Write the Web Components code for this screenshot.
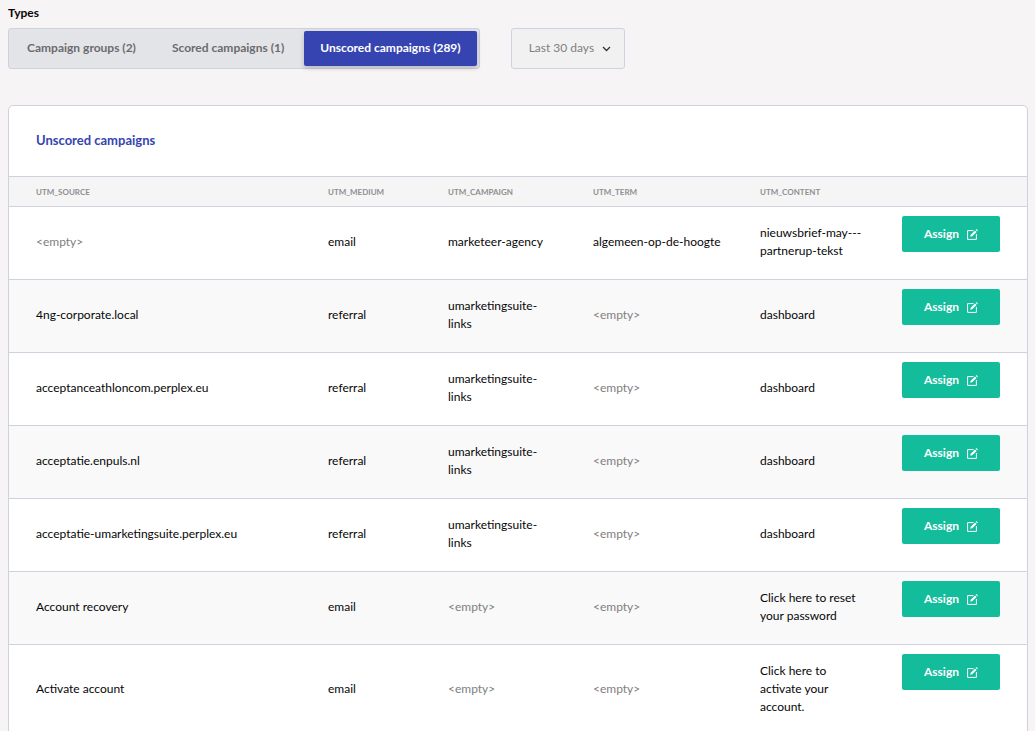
<!DOCTYPE html>
<html lang="en">
<head>
<meta charset="utf-8">
<title>Unscored campaigns</title>
<style>
    html {
        --line: #cfd1dd;
        --blue: #3544b1;
        --green: #13bd9b;
    }
    body {
        margin: 0 7px 0 8px;
        background-color: #f6f4f5;
        color: #060606;
        font-family: Lato, "Liberation Sans", sans-serif;
        font-size: 12px;
        line-height: 18px;
    }
</style>
</head>
<body>
<campaigns-page>
    <type-tabs slot="filters" label="Types">
        <type-tab>Campaign groups (2)</type-tab>
        <type-tab>Scored campaigns (1)</type-tab>
        <type-tab active>Unscored campaigns (289)</type-tab>
    </type-tabs>
    <period-select slot="filters"></period-select>
    <data-card>
        <span slot="title">Unscored campaigns</span>
        <campaign-table></campaign-table>
    </data-card>
</campaigns-page>

<script>
function crearTemplate(html) {
    const template = document.createElement('template');
    template.innerHTML = html;
    return template;
}

class BaseElement extends HTMLElement {
    constructor() {
        super();
        this.attachShadow({ mode: "open" });
        this.shadowRoot.appendChild(this.constructor.template.content.cloneNode(true));
    }
}

class CampaignsPage extends BaseElement {
    static template = crearTemplate(`
<style>
:host {
    display: block;
}
.filters {
    display: flex;
    align-items: flex-end;
    gap: 31px;
    padding-top: 4px;
    margin-bottom: 36px;
}
</style>
<div class="filters"><slot name="filters"></slot></div>
<main><slot></slot></main>
`);
}

class TypeTabs extends BaseElement {
    static template = crearTemplate(`
<style>
:host {
    display: block;
}
#label {
    font-weight: bold;
    margin-bottom: 6px;
}
.bar {
    display: flex;
    gap: 4px;
    padding: 2px;
    border: 1px solid var(--line);
    border-radius: 3px;
    background-color: #e3e4e8;
}
</style>
<div id="label"></div>
<div class="bar" role="group" aria-labelledby="label"><slot></slot></div>
`);
    connectedCallback() {
        this.shadowRoot.getElementById("label").textContent = this.getAttribute("label");
        this.addEventListener("click", (e) => {
            const tab = e.target.closest("type-tab");
            if (!tab) return;
            this.querySelectorAll("type-tab").forEach((t) => t.toggleAttribute("active", t === tab));
        });
    }
}

class TypeTab extends BaseElement {
    static template = crearTemplate(`
<style>
:host {
    display: block;
}
button {
    display: block;
    height: 35px;
    padding: 0 16px 2px;
    border: 0;
    border-radius: 2px;
    background: none;
    color: #6b6b6e;
    font: inherit;
    font-weight: bold;
    white-space: nowrap;
    cursor: pointer;
}
:host([active]) button {
    background-color: var(--blue);
    color: #fff;
    box-shadow: 0 2px 5px rgba(0, 0, 0, 0.2);
}
</style>
<button type="button"><slot></slot></button>
`);
}

class PeriodSelect extends BaseElement {
    static template = crearTemplate(`
<style>
:host {
    display: block;
}
.box {
    display: grid;
    align-items: center;
}
select, svg {
    grid-area: 1 / 1;
}
select {
    appearance: none;
    height: 41px;
    margin: 0;
    padding: 0 29px 2px 17px;
    border: 1px solid var(--line);
    border-radius: 3px;
    background-color: #f1f1f1;
    color: #808080;
    font: inherit;
}
svg {
    justify-self: end;
    margin-right: 14px;
    pointer-events: none;
}
</style>
<div class="box">
    <select aria-label="Period">
        <option>Last 30 days</option>
    </select>
    <svg width="9" height="6" viewBox="0 0 9 6" fill="none" stroke="#333" stroke-width="1.3"><path d="M1 1l3.5 3.5L8 1"/></svg>
</div>
`);
}

class DataCard extends BaseElement {
    static template = crearTemplate(`
<style>
:host {
    display: block;
    overflow: hidden;
    border: 1px solid var(--line);
    border-radius: 5px;
    background-color: #fff;
}
h2 {
    margin: 0;
    padding: 25px 27px 27px;
    color: var(--blue);
    font-size: 13px;
    line-height: 18px;
}
</style>
<h2><slot name="title"></slot></h2>
<slot></slot>
`);
}

class AssignButton extends BaseElement {
    static template = crearTemplate(`
<style>
:host {
    display: block;
}
button {
    display: flex;
    align-items: center;
    justify-content: center;
    gap: 8px;
    width: 98px;
    height: 36px;
    padding: 0;
    border: 0;
    border-radius: 2px;
    background-color: var(--green);
    color: #fff;
    font: inherit;
    font-weight: bold;
    cursor: pointer;
}
</style>
<button type="button">
    <slot></slot>
    <svg width="11" height="11" viewBox="0 0 11 11" fill="none" stroke="#fff"><path d="M6.5 1.6H.6v8.8h8.8V5"/><path d="M3.2 7.8l.5-2 4.4-4.4 1.5 1.5-4.4 4.4z" fill="#fff" stroke="none"/><path d="M8.7.8l1.5 1.5.7-.8L9.5.1z" fill="#fff" stroke="none"/></svg>
</button>
`);
}

const columns = ["utm_source", "utm_medium", "utm_campaign", "utm_term", "utm_content"];
// empty string = no value for that parameter
const campaigns = [
    ["", "email", "marketeer-agency", "algemeen-op-de-hoogte", "nieuwsbrief-may---partnerup-tekst"],
    ["4ng-corporate.local", "referral", "umarketingsuite-links", "", "dashboard"],
    ["acceptanceathloncom.perplex.eu", "referral", "umarketingsuite-links", "", "dashboard"],
    ["acceptatie.enpuls.nl", "referral", "umarketingsuite-links", "", "dashboard"],
    ["acceptatie-umarketingsuite.perplex.eu", "referral", "umarketingsuite-links", "", "dashboard"],
    ["Account recovery", "email", "", "", "Click here to reset your password"],
    ["Activate account", "email", "", "", "Click here to activate your account."]
];

class CampaignTable extends BaseElement {
    static template = crearTemplate(`
<style>
:host {
    display: block;
}
table {
    width: 100%;
    table-layout: fixed;
    border-spacing: 0;
}
.medium { width: 120px; }
.campaign { width: 145px; }
.term { width: 167px; }
.content { width: 142px; }
.action { width: 152px; }
th, td {
    box-sizing: border-box;
    padding: 17px 8px 19px 27px;
    border-top: 1px solid var(--line);
    text-align: left;
    vertical-align: middle;
}
th {
    padding-top: 6px;
    padding-bottom: 5px;
    background-color: #f5f5f5;
    color: #8f8f8f;
    font-size: 8px;
    text-transform: uppercase;
}
tbody tr:nth-child(even) {
    background-color: #f9f9f9;
}
td.assign {
    padding: 9px 27px;
    vertical-align: top;
}
.empty {
    color: #808080;
}
</style>
<table>
    <colgroup>
        <col><col class="medium"><col class="campaign"><col class="term"><col class="content"><col class="action">
    </colgroup>
    <thead><tr></tr></thead>
    <tbody></tbody>
</table>
`);
    connectedCallback() {
        const head = this.shadowRoot.querySelector("thead tr");
        columns.forEach((name) => {
            const th = document.createElement("th");
            th.scope = "col";
            th.textContent = name;
            head.appendChild(th);
        });
        head.appendChild(document.createElement("th"));

        const body = this.shadowRoot.querySelector("tbody");
        campaigns.forEach((campaign) => {
            const row = body.insertRow();
            campaign.forEach((value) => {
                const cell = row.insertCell();
                cell.textContent = value || "<empty>";
                cell.classList.toggle("empty", !value);
            });
            const cell = row.insertCell();
            cell.className = "assign";
            cell.innerHTML = `<assign-button>Assign</assign-button>`;
        });
    }
}

customElements.define("campaigns-page", CampaignsPage);
customElements.define("type-tabs", TypeTabs);
customElements.define("type-tab", TypeTab);
customElements.define("period-select", PeriodSelect);
customElements.define("data-card", DataCard);
customElements.define("assign-button", AssignButton);
customElements.define("campaign-table", CampaignTable);
</script>
</body>
</html>
